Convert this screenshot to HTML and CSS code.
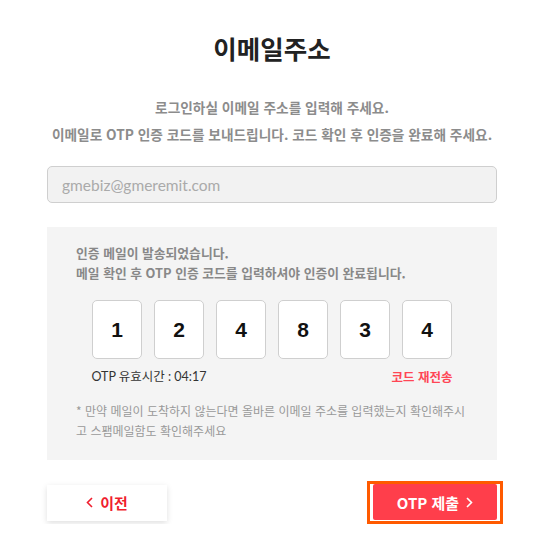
FILE: index.html
```html
<!DOCTYPE html>
<html lang="ko">
<head>
    <meta charset="UTF-8">
    <meta name="viewport" content="width=device-width, initial-scale=1.0">
    <title>이메일주소</title>
    <link rel="stylesheet" href="styles.css">
</head>
<body>
    <div class="container">
        <h1>이메일주소</h1>
        <div class="desc">
            <p>로그인하실 이메일 주소를 입력해 주세요.</p>
            <p>이메일로 OTP 인증 코드를 보내드립니다. 코드 확인 후 인증을 완료해 주세요.</p>
        </div>
        <input type="text" class="email" placeholder="gmebiz@gmeremit.com">

        <div class="otp-box">
            <p class="otp-info">인증 메일이 발송되었습니다.<br>메일 확인 후 OTP 인증 코드를 입력하셔야 인증이 완료됩니다.</p>
            <div class="otp-inputs">
                <input type="text" maxlength="1" value="1">
                <input type="text" maxlength="1" value="2">
                <input type="text" maxlength="1" value="4">
                <input type="text" maxlength="1" value="8">
                <input type="text" maxlength="1" value="3">
                <input type="text" maxlength="1" value="4">
            </div>
            <div class="otp-meta">
                <span class="timer">OTP 유효시간 : 04:17</span>
                <a href="#" class="resend">코드 재전송</a>
            </div>
            <p class="notice">* 만약 메일이 도착하지 않는다면 올바른 이메일 주소를 입력했는지 확인해주시고 스팸메일함도 확인해주세요</p>
        </div>

        <div class="actions">
            <button class="btn-prev">
                <svg class="chev" width="7" height="11" viewBox="0 0 7 11"><path d="M6 1 L1.5 5.5 L6 10" fill="none" stroke="currentColor" stroke-width="1.6"/></svg>
                이전
            </button>
            <div class="submit-wrap">
                <button class="btn-submit">
                    OTP 제출
                    <svg class="chev" width="7" height="11" viewBox="0 0 7 11"><path d="M1 1 L5.5 5.5 L1 10" fill="none" stroke="currentColor" stroke-width="1.6"/></svg>
                </button>
            </div>
        </div>
    </div>
</body>
</html>
```

FILE: styles.css
```css
body {
    margin: 0;
    padding-right: 3px;
    font-family: "Noto Sans CJK KR", "Noto Sans", sans-serif;
    background: #fff;
}
.container {
    width: 450px;
    margin: 0 auto;
    padding-top: 30px;
}
h1 {
    margin: 0;
    font-size: 25.5px;
    line-height: 36px;
    font-weight: 700;
    color: #222;
    text-align: center;
}
.desc {
    margin-top: 28px;
    text-align: center;
}
.desc p {
    margin: 0;
    font-size: 13.7px;
    line-height: 27px;
    font-weight: 700;
    color: #8c8c8c;
}
.email {
    display: block;
    width: 100%;
    height: 37px;
    margin-top: 18px;
    padding: 0 14px;
    box-sizing: border-box;
    background: #f2f2f2;
    border: 1px solid #cfcfcf;
    border-radius: 5px;
    font-family: Lato, "Noto Sans CJK KR", sans-serif;
    font-size: 15.5px;
}
.email::placeholder {
    color: #aaa;
}
.otp-box {
    margin-top: 24px;
    padding: 16px 29px 19px;
    background: #f4f4f4;
}
.otp-info {
    margin: 0;
    font-size: 12.8px;
    line-height: 20px;
    font-weight: 700;
    color: #888;
}
.otp-inputs {
    display: flex;
    justify-content: center;
    gap: 12px;
    margin-top: 17px;
}
.otp-inputs input {
    width: 50px;
    height: 59px;
    box-sizing: border-box;
    padding: 0;
    border: 1px solid #cfcfcf;
    border-radius: 5px;
    background: #fff;
    text-align: center;
    font-family: "Liberation Sans", Arial, sans-serif;
    font-size: 21px;
    font-weight: 700;
    color: #111;
}
.otp-meta {
    display: flex;
    justify-content: space-between;
    align-items: center;
    width: 361px;
    margin: 8px auto 0;
    line-height: 20px;
}
.timer {
    color: #333;
    font-family: Lato, "Noto Sans CJK KR", sans-serif;
    font-size: 12.5px;
}
.resend {
    color: #ff4655;
    font-size: 12.5px;
    font-weight: 700;
    text-decoration: none;
}
.notice {
    margin: 14px 0 0;
    width: 392px;
    font-size: 12px;
    line-height: 20px;
    color: #999;
    word-break: break-all;
}
.actions {
    display: flex;
    justify-content: space-between;
    align-items: center;
    margin-top: 21px;
}
.actions button {
    display: flex;
    align-items: center;
    justify-content: center;
    gap: 7px;
    height: 36px;
    border: none;
    font-family: "Noto Sans CJK KR", sans-serif;
    font-size: 15px;
    font-weight: 700;
    cursor: pointer;
}
.btn-prev {
    width: 120px;
    background: #fff;
    color: #f01e2e;
    box-shadow: 0 2px 6px rgba(0, 0, 0, 0.13);
}
.submit-wrap {
    display: flex;
    padding: 0 3px 1px;
    border: 3px solid #ff5a00;
    margin-right: -6px;
}
.btn-submit {
    width: 124px;
    background: #ff3e4b;
    color: #fff;
    border-radius: 2px;
}
```
